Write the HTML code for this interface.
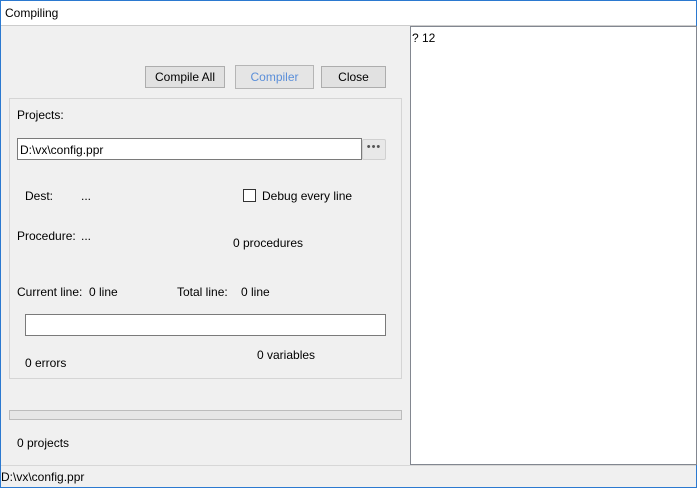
<!DOCTYPE html><html><head><style>
*{margin:0;padding:0;box-sizing:border-box}
body{width:697px;height:488px;position:relative;overflow:hidden;font-family:"Liberation Sans",sans-serif;font-size:12px;color:#000;background:#f0f0f0}
.a{position:absolute;white-space:nowrap}
.btn{position:absolute;background:#e1e1e1;border:1px solid #adadad;text-align:center;line-height:20px}
</style></head><body>
<div class="a" style="left:0;top:0;width:697px;height:488px;border:1px solid #2b79d0"></div>
<div class="a" style="left:1px;top:1px;width:695px;height:25px;background:#fff;border-bottom:1px solid #ccc"></div>
<div class="a" style="left:5px;top:6px">Compiling</div>
<div class="btn" style="left:145px;top:66px;width:80px;height:22px">Compile All</div>
<div class="btn" style="left:235px;top:65px;width:79px;height:24px;line-height:22px;color:#5b8fd9;border-color:#b5b5b5;background:#e5e5e5">Compiler</div>
<div class="btn" style="left:321px;top:66px;width:65px;height:22px">Close</div>
<div class="a" style="left:9px;top:98px;width:393px;height:281px;border:1px solid #d5d5d5"></div>
<div class="a" style="left:17px;top:108px">Projects:</div>
<div class="a" style="left:17px;top:138px;width:345px;height:22px;background:#fff;border:1px solid #7a7a7a;padding:4px 0 0 2px">D:\vx\config.ppr</div>
<div class="a" style="left:362px;top:139px;width:24px;height:21px;background:#e8e8e8;border:1px solid #d0d0d0;border-radius:2px;text-align:center;line-height:14px;color:#555;font-size:11px;letter-spacing:1px">•••</div>
<div class="a" style="left:25px;top:189px">Dest:</div>
<div class="a" style="left:81px;top:189px">...</div>
<div class="a" style="left:243px;top:189px;width:13px;height:13px;background:#fff;border:1px solid #333"></div>
<div class="a" style="left:262px;top:189px">Debug every line</div>
<div class="a" style="left:17px;top:229px">Procedure:</div>
<div class="a" style="left:81px;top:229px">...</div>
<div class="a" style="left:233px;top:236px">0 procedures</div>
<div class="a" style="left:17px;top:285px">Current line:</div>
<div class="a" style="left:89px;top:285px">0 line</div>
<div class="a" style="left:177px;top:285px">Total line:</div>
<div class="a" style="left:241px;top:285px">0 line</div>
<div class="a" style="left:25px;top:314px;width:361px;height:22px;background:#fff;border:1px solid #7a7a7a"></div>
<div class="a" style="left:257px;top:348px">0 variables</div>
<div class="a" style="left:25px;top:356px">0 errors</div>
<div class="a" style="left:9px;top:410px;width:393px;height:10px;background:#e6e6e6;border:1px solid #bcbcbc"></div>
<div class="a" style="left:17px;top:436px">0 projects</div>
<div class="a" style="left:410px;top:26px;width:287px;height:439px;background:#fff;border:1px solid #828790"></div>
<div class="a" style="left:412px;top:31px">? 12</div>
<div class="a" style="left:1px;top:465px;width:695px;height:1px;background:#d7d7d7"></div>
<div class="a" style="left:1px;top:470px">D:\vx\config.ppr</div>
</body></html>
